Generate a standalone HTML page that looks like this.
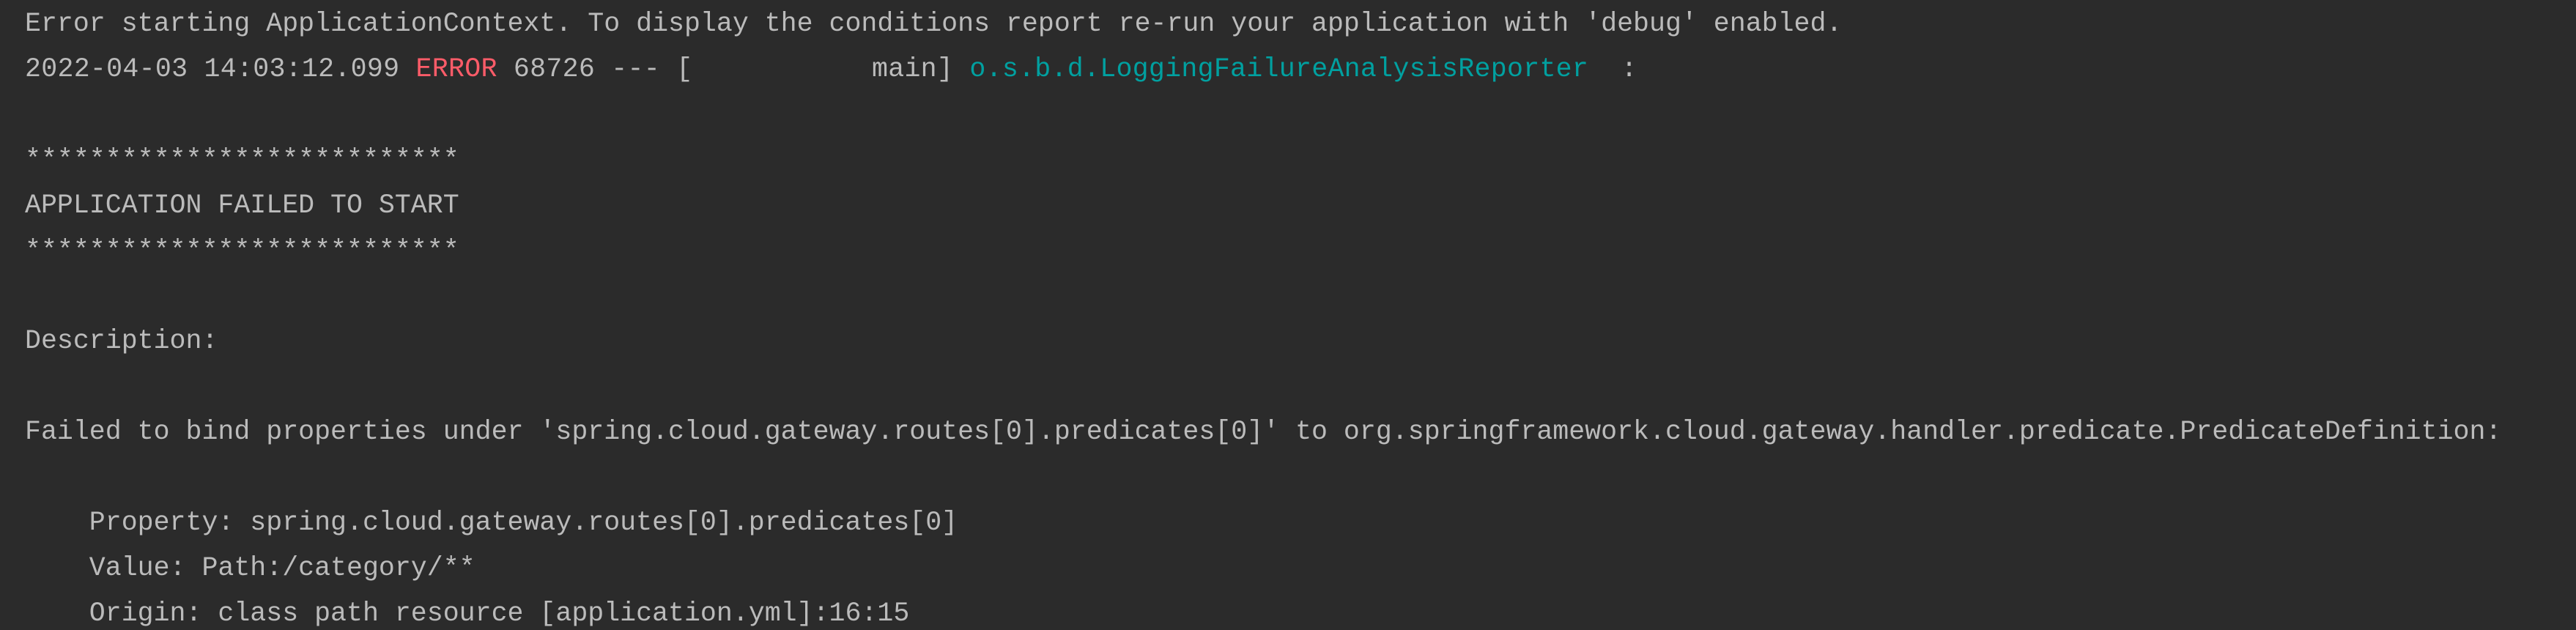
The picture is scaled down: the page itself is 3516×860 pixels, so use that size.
<!DOCTYPE html>
<html><head><meta charset="utf-8"><style>
html,body{margin:0;padding:0;background:#2b2b2b;width:3516px;height:860px;overflow:hidden}
pre{margin:0;padding:2px 0 0 34px;font-family:"Liberation Mono",monospace;font-size:36.6px;line-height:61.9px;color:#bbbbbb;white-space:pre}
.r{color:#ff5c69}.c{color:#00a0a0}.l2{letter-spacing:0.28px}
</style></head><body><pre>Error starting ApplicationContext. To display the conditions report re-run your application with 'debug' enabled.
<span class="l2">2022-04-03 14:03:12.099 <span class="r">ERROR</span> 68726 --- [           main] <span class="c">o.s.b.d.LoggingFailureAnalysisReporter</span>  :</span>

***************************
APPLICATION FAILED TO START
***************************

Description:

Failed to bind properties under 'spring.cloud.gateway.routes[0].predicates[0]' to org.springframework.cloud.gateway.handler.predicate.PredicateDefinition:

    Property: spring.cloud.gateway.routes[0].predicates[0]
    Value: Path:/category/**
    Origin: class path resource [application.yml]:16:15</pre></body></html>
